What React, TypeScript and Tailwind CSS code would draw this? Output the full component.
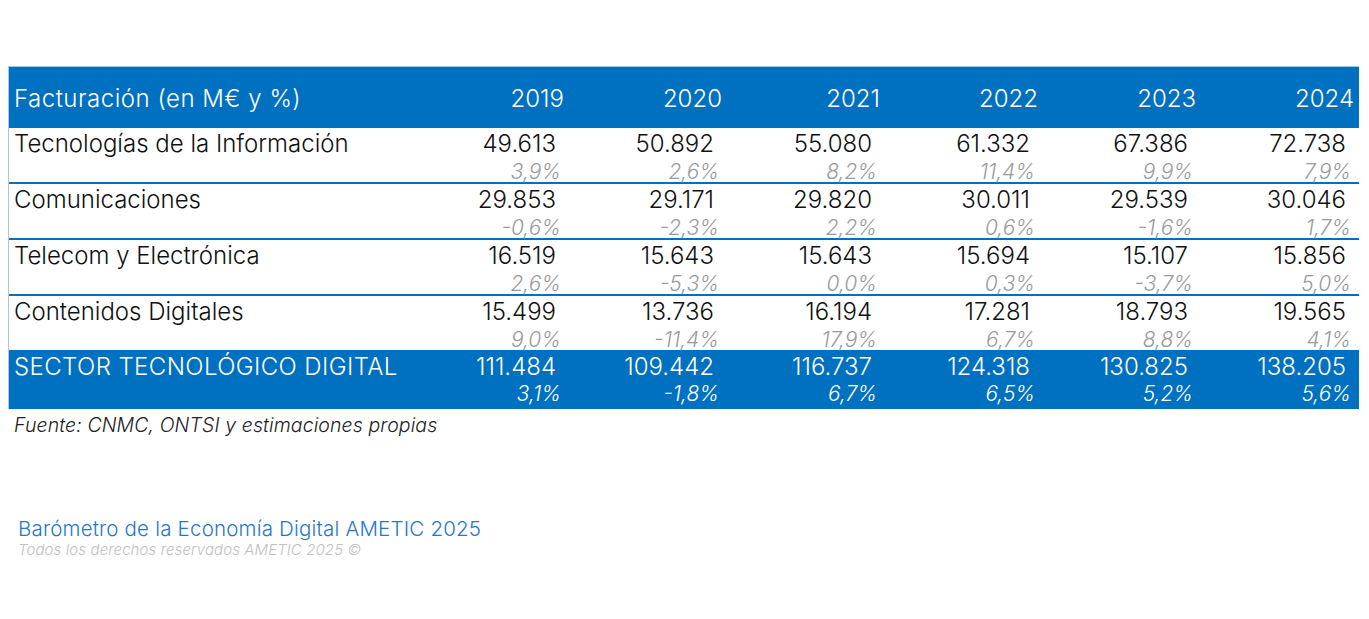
import React from "react";

const years = ["2019", "2020", "2021", "2022", "2023", "2024"];

const rows: { label: string; values: string[]; pcts: string[] }[] = [
  {
    label: "Tecnologías de la Información",
    values: ["49.613", "50.892", "55.080", "61.332", "67.386", "72.738"],
    pcts: ["3,9%", "2,6%", "8,2%", "11,4%", "9,9%", "7,9%"],
  },
  {
    label: "Comunicaciones",
    values: ["29.853", "29.171", "29.820", "30.011", "29.539", "30.046"],
    pcts: ["-0,6%", "-2,3%", "2,2%", "0,6%", "-1,6%", "1,7%"],
  },
  {
    label: "Telecom y Electrónica",
    values: ["16.519", "15.643", "15.643", "15.694", "15.107", "15.856"],
    pcts: ["2,6%", "-5,3%", "0,0%", "0,3%", "-3,7%", "5,0%"],
  },
  {
    label: "Contenidos Digitales",
    values: ["15.499", "13.736", "16.194", "17.281", "18.793", "19.565"],
    pcts: ["9,0%", "-11,4%", "17,9%", "6,7%", "8,8%", "4,1%"],
  },
];

const total = {
  label: "SECTOR TECNOLÓGICO DIGITAL",
  values: ["111.484", "109.442", "116.737", "124.318", "130.825", "138.205"],
  pcts: ["3,1%", "-1,8%", "6,7%", "6,5%", "5,2%", "5,6%"],
};

const font = { fontFamily: "Inter, 'Noto Sans', sans-serif" };

export default function App() {
  return (
    <div className="w-[1369px] h-[619px] bg-white relative" style={font}>
      <div className="pt-[66px] pl-[8px]">
        <div className="w-[1351px] border-l border-[#a8c6e6]">
          {/* header */}
          <div className="border-t border-[#a8c6e6] bg-[#0070c0] h-[62px] grid grid-cols-[401px_repeat(6,158px)] items-center text-white font-light text-[24px]">
            <div className="pl-[5px] pt-[2px] leading-[30px] tracking-[0.5px]">Facturación (en M€ y %)</div>
            {years.map((y) => (
              <div key={y} className="text-right pr-[4px] pt-[2px] leading-[30px]">
                {y}
              </div>
            ))}
          </div>
          {rows.map((r, i) => (
            <div
              key={r.label}
              className={`grid grid-cols-[401px_repeat(6,158px)] ${i < rows.length - 1 ? "h-[56px] border-b-2 border-[#0070c0]" : "h-[54px]"}`}
            >
              <div className="pl-[5px] pt-[1px] text-[24px] font-light text-[#111] leading-[30px]">
                {r.label}
              </div>
              {r.values.map((v, j) => (
                <div key={j} className="flex flex-col items-end">
                  <div className="pr-[12px] pt-[1px] text-[24px] font-light text-[#111] leading-[30px]">{v}</div>
                  <div className="pr-[7px] mt-[1px] text-[21px] font-light italic text-[#9a9a9a] leading-[24px]">
                    {r.pcts[j]}
                  </div>
                </div>
              ))}
            </div>
          ))}
          <div className="grid grid-cols-[401px_repeat(6,158px)] h-[59px] bg-[#0070c0] text-white font-light">
            <div className="pl-[5px] pt-[2px] text-[24px] leading-[30px] tracking-[0.4px]">{total.label}</div>
            {total.values.map((v, j) => (
              <div key={j} className="flex flex-col items-end">
                <div className="pr-[12px] pt-[2px] text-[24px] leading-[30px]">{v}</div>
                <div className="pr-[7px] mt-[0px] text-[21px] italic leading-[24px]">{total.pcts[j]}</div>
              </div>
            ))}
          </div>
        </div>
        <div className="pl-[6px] pt-[3px] text-[19.5px] italic font-light text-[#222] leading-[26px] tracking-[0.1px]">
          Fuente: CNMC, ONTSI y estimaciones propias
        </div>
      </div>
      <div className="pl-[18px] pt-[79px]">
        <div className="text-[20.5px] font-light text-[#2677cc] leading-[24px] tracking-[0.2px]">
          Barómetro de la Economía Digital AMETIC 2025
        </div>
        <div className="text-[15px] italic font-light text-[#c0c0c0] leading-[18px] tracking-[0.1px]">
          Todos los derechos reservados AMETIC 2025 ©
        </div>
      </div>
    </div>
  );
}
